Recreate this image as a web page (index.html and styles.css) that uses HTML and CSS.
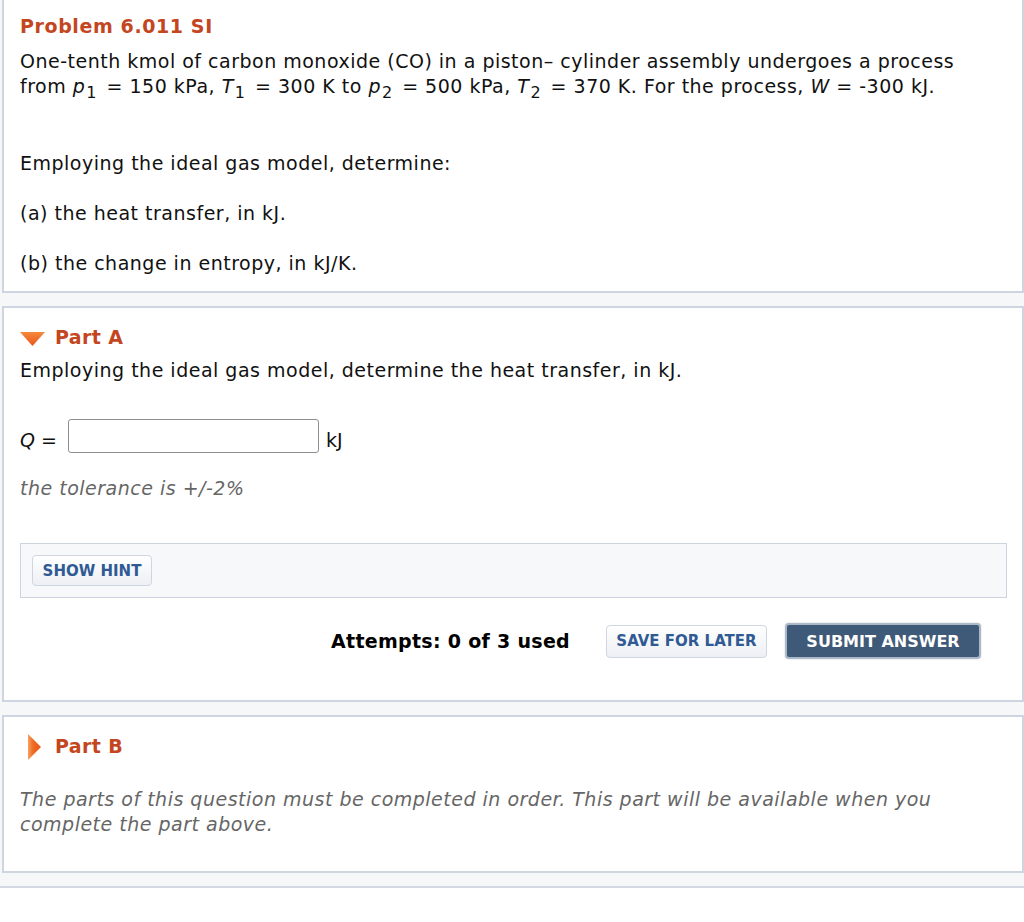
FILE: index.html
```html
<!DOCTYPE html>
<html>
<head>
<meta charset="utf-8">
<link rel="stylesheet" href="styles.css">
</head>
<body>
<div class="outer">
  <section class="panel intro">
    <h1 class="title">Problem 6.011 SI</h1>
    <p class="text">One-tenth kmol of carbon monoxide (CO) in a piston– cylinder assembly undergoes a process<br>from <i>p</i><sub>1</sub> = 150 kPa, <i>T</i><sub>1</sub> = 300 K to <i>p</i><sub>2</sub> = 500 kPa, <i>T</i><sub>2</sub> = 370 K. For the process, <i>W</i> = -300 kJ.</p>
    <p class="text gap-lg">Employing the ideal gas model, determine:</p>
    <p class="text gap-md">(a) the heat transfer, in kJ.</p>
    <p class="text gap-md">(b) the change in entropy, in kJ/K.</p>
  </section>

  <section class="panel part-a">
    <div class="part-head">
      <svg class="tri-down" width="25" height="14" viewBox="0 0 25 14"><defs><linearGradient id="gd" x1="0" y1="0" x2="0" y2="1"><stop offset="0" stop-color="#f58a3c"/><stop offset="1" stop-color="#e8561a"/></linearGradient></defs><polygon points="0,0 25,0 12.5,14" fill="url(#gd)"/></svg>
      <span class="part-title">Part A</span>
    </div>
    <p class="text prompt">Employing the ideal gas model, determine the heat transfer, in kJ.</p>
    <div class="answer-row">
      <span class="label"><i>Q</i> =</span>
      <span class="input"></span>
      <span class="label unit">kJ</span>
    </div>
    <p class="tolerance">the tolerance is +/-2%</p>
    <div class="hint-box">
      <button class="btn btn-light hint">SHOW HINT</button>
    </div>
    <div class="actions">
      <span class="attempts">Attempts: 0 of 3 used</span>
      <button class="btn btn-light save">SAVE FOR LATER</button>
      <button class="btn btn-dark">SUBMIT ANSWER</button>
    </div>
  </section>

  <section class="panel part-b">
    <div class="part-head">
      <svg class="tri-right" width="15" height="26" viewBox="0 0 15 26"><defs><linearGradient id="gr" x1="0" y1="0" x2="1" y2="0"><stop offset="0" stop-color="#f7a060"/><stop offset="0.4" stop-color="#ef6a22"/><stop offset="1" stop-color="#e8561a"/></linearGradient></defs><polygon points="1,0 14,13 1,26" fill="url(#gr)"/></svg>
      <span class="part-title">Part B</span>
    </div>
    <p class="locked">The parts of this question must be completed in order. This part will be available when you<br>complete the part above.</p>
  </section>
</div>
</body>
</html>
```

FILE: styles.css
```css
html, body {
  margin: 0;
  padding: 0;
  background: #ffffff;
}

body {
  font-family: "DejaVu Sans", Verdana, sans-serif;
  color: #111;
}

.outer {
  background: #f6f7f9;
  border-bottom: 2px solid #d3d8e2;
  padding-bottom: 13px;
  display: flex;
  flex-direction: column;
  gap: 13px;
}

.panel {
  background: #fff;
  margin-left: 2px;
  border: 2px solid #cfd5e0;
}

.intro {
  border-top: none;
  padding: 14px 0 15px 16px;
}

.title {
  margin: 0;
  font-size: 19px;
  line-height: 25px;
  font-weight: bold;
  letter-spacing: 0.6px;
  color: #c4461f;
}

.text {
  margin: 10px 0 0 0;
  font-size: 19px;
  line-height: 25px;
  letter-spacing: 0.5px;
  white-space: nowrap;
}

.text sub {
  font-size: 16px;
  line-height: 0;
  vertical-align: -5px;
  margin: 0 3px 0 1px;
}

.gap-lg { margin-top: 52px; }
.gap-md { margin-top: 25px; }

.part-a {
  padding: 17px 0 41px 16px;
}

.part-head {
  display: flex;
  align-items: center;
  gap: 10px;
  height: 25px;
}

.tri-down { display: block; margin-top: 2px; }
.tri-right { display: block; margin-left: 7px; margin-right: 3px; }

.part-title {
  font-size: 19px;
  font-weight: bold;
  letter-spacing: 0.4px;
  color: #c4461f;
  line-height: 25px;
}

.prompt { margin-top: 8px; }

.answer-row {
  display: flex;
  align-items: flex-start;
  margin-top: 36px;
  height: 34px;
}

.label {
  font-size: 19px;
  line-height: 25px;
  margin-top: 9px;
}

.input {
  display: block;
  width: 249px;
  height: 32px;
  border: 1px solid #8e8e8e;
  border-radius: 3px;
  margin-left: 11px;
  background: #fff;
}

.unit { margin-left: 7px; }

.tolerance {
  margin: 23px 0 0 0;
  font-size: 19px;
  line-height: 25px;
  letter-spacing: 0.5px;
  font-style: italic;
  color: #666;
}

.hint-box {
  margin: 42px 15px 0 0;
  background: #f7f8fa;
  border: 1px solid #ccd3de;
  padding: 11px;
  display: flex;
}

.btn {
  font-family: "DejaVu Sans", Verdana, sans-serif;
  font-weight: bold;
  font-size: 15px;
  border-radius: 4px;
  padding: 0;
  height: 31px;
  cursor: pointer;
}

.btn-light {
  color: #2f5a94;
  background: linear-gradient(#ffffff, #eceff4);
  border: 1px solid #cfd6e1;
}

.hint { width: 120px; }

.btn-dark {
  color: #fff;
  background: #3f5a78;
  border: 2px solid #aab8c8;
  width: 196px;
  height: 36px;
  font-size: 16px;
  box-shadow: 0 0 2px rgba(0,0,0,0.2);
}

.actions {
  display: flex;
  align-items: center;
  justify-content: flex-end;
  margin: 25px 41px 0 0;
}

.attempts {
  font-size: 19px;
  font-weight: bold;
  letter-spacing: 0.3px;
  color: #000;
  margin-right: 36px;
}

.save {
  width: 161px;
  height: 33px;
  margin-right: 18px;
}

.part-b {
  padding: 17px 0 34px 16px;
}

.locked {
  margin: 28px 0 0 0;
  font-size: 19px;
  line-height: 25px;
  letter-spacing: 0.5px;
  font-style: italic;
  color: #666;
  white-space: nowrap;
}
```
